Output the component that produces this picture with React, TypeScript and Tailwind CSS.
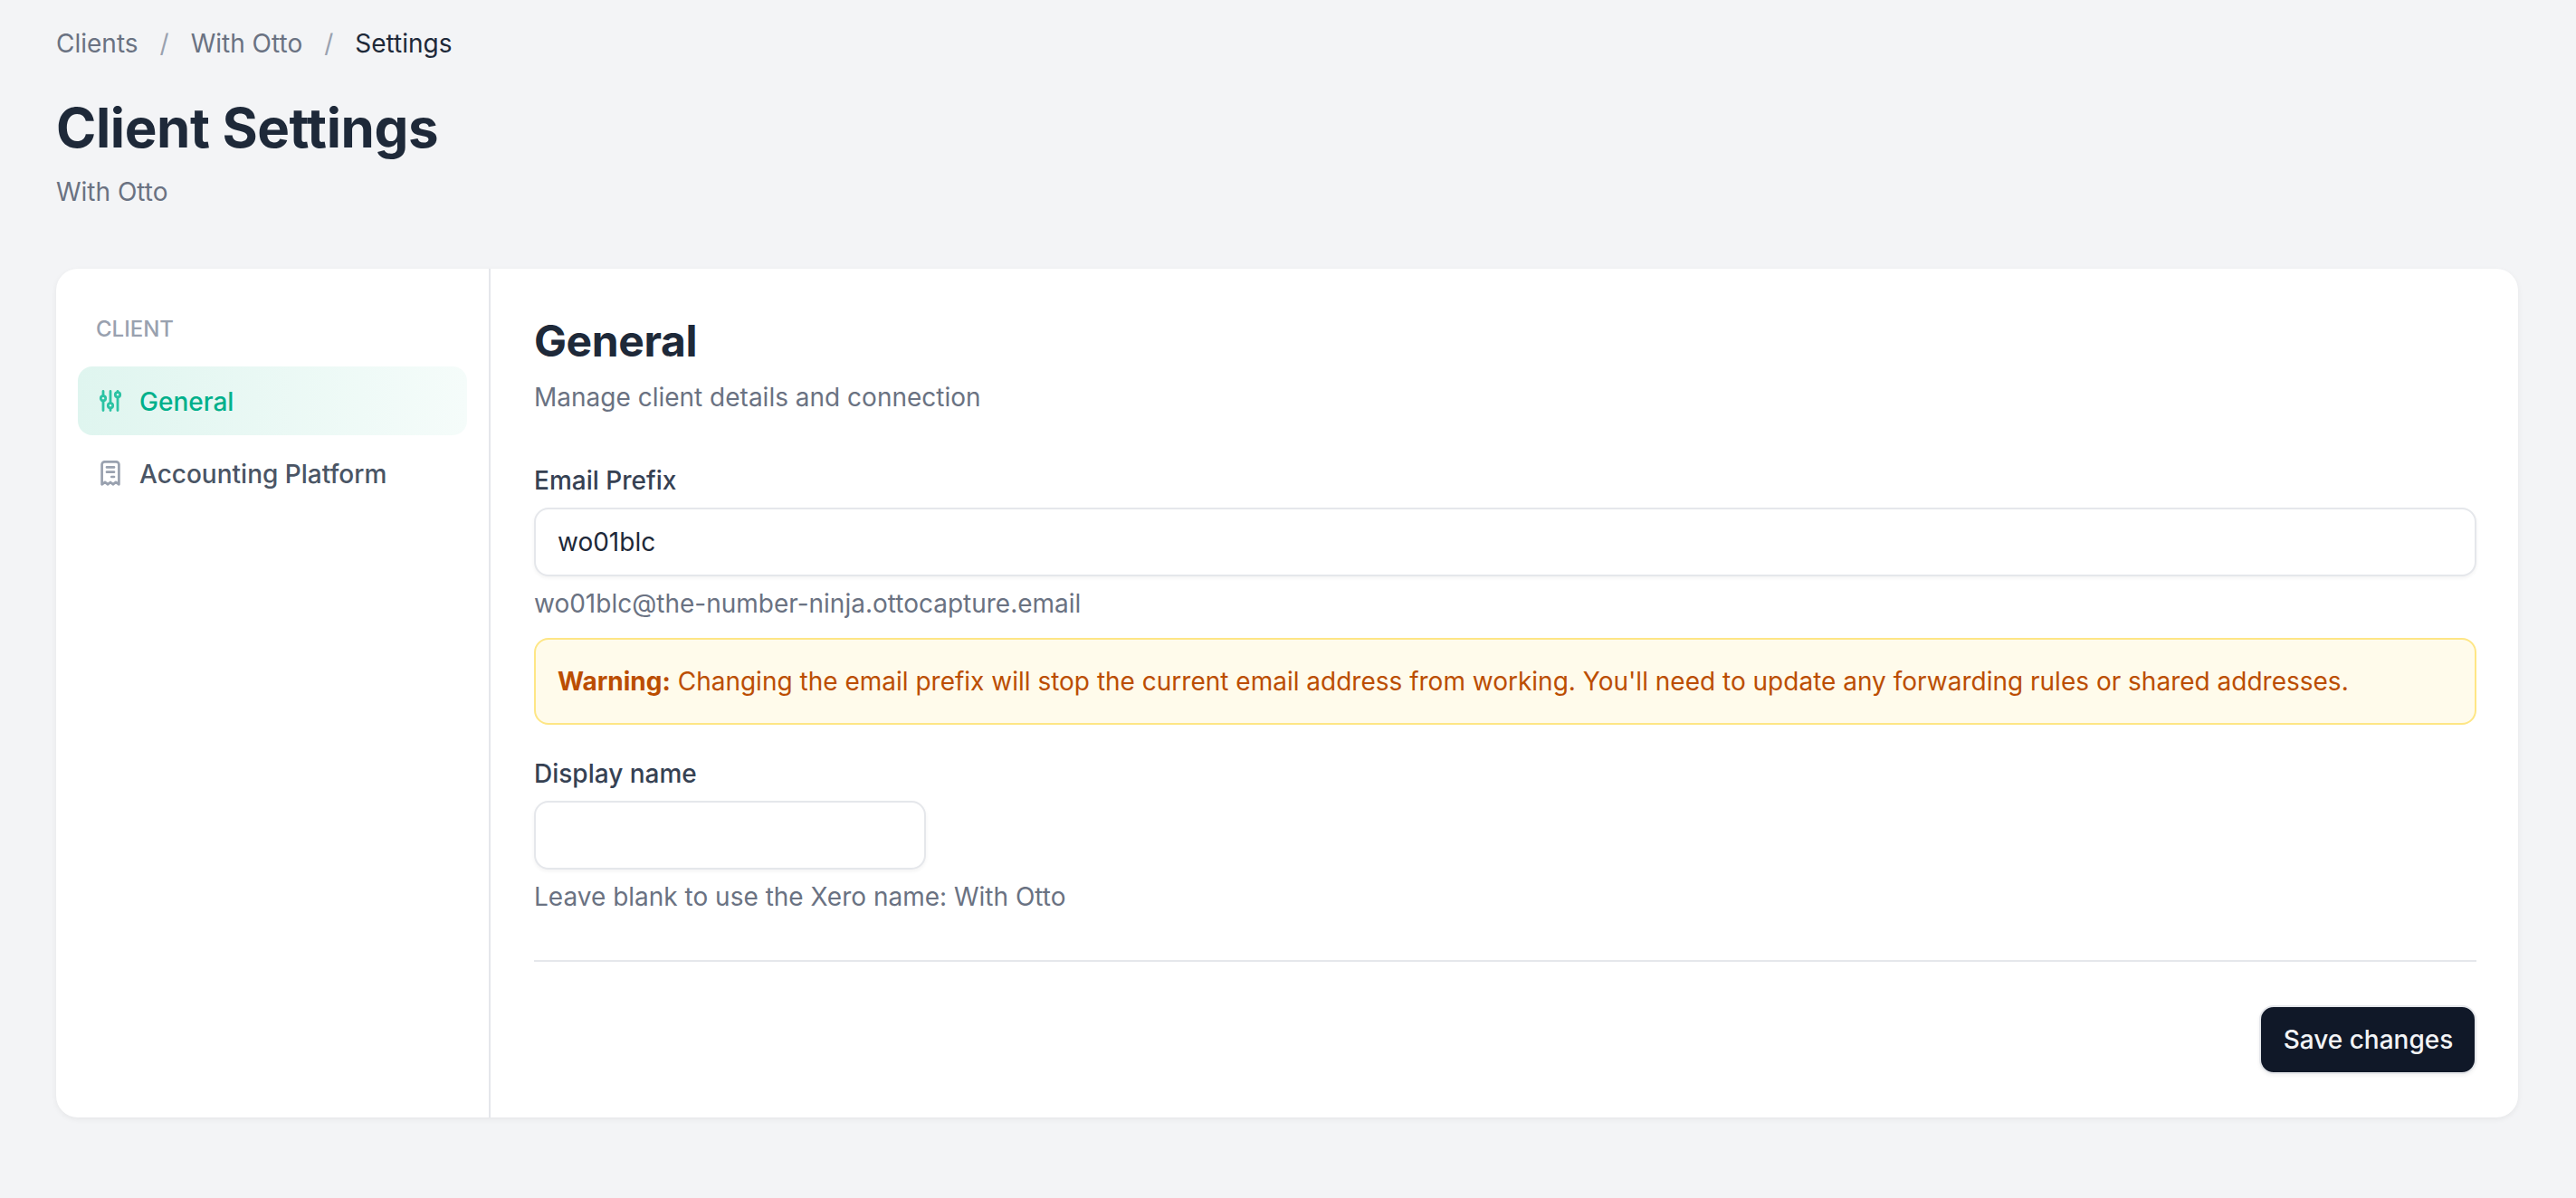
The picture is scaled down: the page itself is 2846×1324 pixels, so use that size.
import type { ReactNode } from "react";

function SlidersIcon() {
  return (
    <svg width="28" height="28" viewBox="0 0 28 28" fill="none" stroke="currentColor" strokeWidth="2.8" strokeLinecap="round">
      <path d="M6 3.4v5M6 14v10.6M14 3.4v13M14 22v2.6M22 3.4v1M22 10v14.6" />
      <circle cx="6" cy="11.3" r="2.7" />
      <circle cx="14" cy="19.3" r="2.7" />
      <circle cx="22" cy="7.3" r="2.7" />
    </svg>
  );
}

function ReceiptIcon() {
  return (
    <svg width="28" height="28" viewBox="0 0 28 28" fill="none" stroke="currentColor" strokeWidth="2.7" strokeLinecap="round" strokeLinejoin="round">
      <path d="M4.600 26.300V4.300a3 3 0 0 1 3-3h12.800a3 3 0 0 1 3 3v22L20 23.900l-3.200 2.400L14 23.900l-2.800 2.400L8 23.900z" />
      <path d="M10 7.400h8M10 12.700h8M15.300 18H18" />
    </svg>
  );
}

function NavItem({ icon, label, active }: { icon: ReactNode; label: string; active?: boolean }) {
  return (
    <a
      className={
        active
          ? "flex h-[76px] items-center gap-[18px] rounded-2xl bg-linear-to-r from-[#dff5ef] to-[#f5fcfa] px-[22px] font-medium text-[#00b08b]"
          : "flex h-[76px] items-center gap-[18px] rounded-2xl px-[22px] font-medium text-gray-600"
      }
    >
      <span className={active ? "text-[#2cc3a4]" : "text-gray-400"}>{icon}</span>
      <span className="pt-0.5">{label}</span>
    </a>
  );
}

const inputClass =
  "block h-[76px] rounded-2xl border-2 border-gray-200 bg-white px-6 text-gray-800 shadow-[0_2px_4px_rgba(0,0,0,0.05)] outline-none";

export default function App() {
  return (
    <div className="min-h-[1324px] bg-gray-100 pt-7 pr-16 pl-[62px] font-['Inter',sans-serif] text-[28px] leading-10 text-gray-500">
      <nav className="flex gap-6">
        <a>Clients</a>
        <span className="text-gray-400">/</span>
        <a>With Otto</a>
        <span className="text-gray-400">/</span>
        <span className="text-gray-800">Settings</span>
      </nav>
      <h1 className="mt-[37px] text-[60px] leading-[72px] font-bold tracking-[-0.4px] text-gray-800">Client Settings</h1>
      <p className="mt-[15px]">With Otto</p>

      <div className="mt-[65px] flex h-[938px] overflow-hidden rounded-3xl bg-white shadow-[0_2px_6px_rgba(0,0,0,0.06)]">
        <aside className="w-[480px] shrink-0 border-r-2 border-gray-200 px-6 pt-[51px]">
          <h3 className="mb-[25px] pl-5 text-2xl leading-8 font-medium text-gray-400">CLIENT</h3>
          <div className="flex flex-col gap-1">
            <NavItem icon={<SlidersIcon />} label="General" active />
            <NavItem icon={<ReceiptIcon />} label="Accounting Platform" />
          </div>
        </aside>

        <main className="flex-1 pt-12 pr-[46px] pl-12">
          <h2 className="text-5xl leading-[64px] font-bold tracking-[-0.4px] text-gray-800">General</h2>
          <p className="mt-2.5">Manage client details and connection</p>

          <label className="mt-[52px] mb-2.5 block font-medium text-gray-700">Email Prefix</label>
          <input className={inputClass + " w-full"} defaultValue="wo01blc" />
          <p className="mt-2.5">wo01blc@the-number-ninja.ottocapture.email</p>

          <div className="mt-[18px] flex h-24 items-center rounded-2xl border-2 border-amber-200 bg-amber-50 px-6 text-amber-700">
            <p>
              <strong className="font-bold">Warning:</strong> Changing the email prefix will stop the current email address
              from working. You'll need to update any forwarding rules or shared addresses.
            </p>
          </div>

          <label className="mt-[34px] mb-2.5 block font-medium text-gray-700">Display name</label>
          <input className={inputClass + " w-[433px]"} />
          <p className="mt-2.5">Leave blank to use the Xero name: With Otto</p>

          <div className="mt-[50px] flex justify-end border-t-2 border-gray-200 pt-12">
            <button className="h-[76px] w-60 rounded-2xl border-2 border-gray-200 bg-gray-900 pl-px font-medium text-gray-100 shadow-[0_2px_4px_rgba(0,0,0,0.05)]">
              Save changes
            </button>
          </div>
        </main>
      </div>
    </div>
  );
}
